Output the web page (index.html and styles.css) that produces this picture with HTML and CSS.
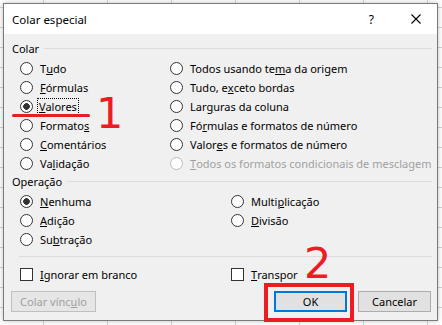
FILE: index.html
```html
<!DOCTYPE html>
<html lang="pt-BR">
<head>
    <meta charset="UTF-8">
    <meta name="viewport" content="width=device-width, initial-scale=1.0">
    <title>Colar especial</title>
    <link rel="stylesheet" href="styles.css">
</head>
<body>
    <div class="dialog">
        <div class="titlebar">
            <span class="title">Colar especial</span>
            <span class="help">?</span>
            <span class="close">
                <svg width="10" height="10" viewBox="0 0 10 10"><path d="M0.5 0.5 L9.5 9.5 M9.5 0.5 L0.5 9.5" stroke="#000" stroke-width="1.1" fill="none"/></svg>
            </span>
        </div>

        <div class="content">
            <div class="group-title"><span>Colar</span></div>
            <div class="options paste">
                <label class="opt"><span class="radio"></span>T<u>u</u>do</label>
                <label class="opt"><span class="radio"></span>Todos usando te<u>m</u>a da origem</label>
                <label class="opt"><span class="radio"></span><u>F</u>órmulas</label>
                <label class="opt"><span class="radio"></span>Tudo, e<u>x</u>ceto bordas</label>
                <label class="opt"><span class="radio checked"></span><span class="focus"><u>V</u>alores</span></label>
                <label class="opt"><span class="radio"></span>Lar<u>g</u>uras da coluna</label>
                <label class="opt"><span class="radio"></span>Formato<u>s</u></label>
                <label class="opt"><span class="radio"></span>Fó<u>r</u>mulas e formatos de número</label>
                <label class="opt"><span class="radio"></span><u>C</u>omentários</label>
                <label class="opt"><span class="radio"></span>Valor<u>e</u>s e formatos de número</label>
                <label class="opt"><span class="radio"></span>Va<u>l</u>idação</label>
                <label class="opt disabled"><span class="radio"></span><u>T</u>odos os formatos condicionais de mesclagem</label>
            </div>

            <div class="group-title"><span>Operação</span></div>
            <div class="options ops">
                <label class="opt"><span class="radio checked"></span><u>N</u>enhuma</label>
                <label class="opt"><span class="radio"></span>Multi<u>p</u>licação</label>
                <label class="opt"><span class="radio"></span><u>A</u>dição</label>
                <label class="opt"><span class="radio"></span><u>D</u>ivisão</label>
                <label class="opt"><span class="radio"></span>Su<u>b</u>tração</label>
            </div>

            <div class="sep"></div>

            <div class="checks">
                <label class="opt"><span class="check"></span><u>I</u>gnorar em branco</label>
                <label class="opt"><span class="check"></span><u>T</u>ranspor</label>
            </div>

            <div class="buttons">
                <button class="btn link" disabled>Colar vínc<u>u</u>lo</button>
                <button class="btn default">OK</button>
                <button class="btn">Cancelar</button>
            </div>
        </div>

        <!-- annotations drawn over the dialog -->
        <div class="mark mark-1">1</div>
        <div class="underline"></div>
        <div class="mark mark-2">2</div>
        <div class="ok-box"></div>
    </div>
</body>
</html>
```

FILE: styles.css
```css
* {
    margin: 0;
    padding: 0;
    box-sizing: border-box;
}

body {
    width: 442px;
    height: 325px;
    overflow: hidden;
    font-family: "Noto Sans", sans-serif;
    font-size: 11px;
    color: #000;
    background-color: #fff;
    background-image:
        linear-gradient(to right, #d4d4d4 1px, transparent 1px),
        linear-gradient(to bottom, #d4d4d4 1px, transparent 1px);
    background-size: 64px 20px;
    background-position: 43px 7px;
}

.dialog {
    position: relative;
    margin: 3px 0 0 3px;
    width: 435px;
    height: 318px;
    border: 1px solid #7a7a7a;
    background: #f0f0f0;
    box-shadow: 0 0 5px rgba(0, 0, 0, 0.25);
}

.titlebar {
    height: 30px;
    background: #fff;
    display: flex;
    align-items: center;
    padding-left: 8px;
    font-size: 11.5px;
}

.help {
    margin-left: auto;
    font-size: 12px;
}

.close {
    display: flex;
    margin: 0 16px 0 37px;
}

.content {
    padding: 6px 5px 0 8px;
}

.group-title {
    display: flex;
    align-items: center;
    height: 16px;
}

.group-title::after {
    content: "";
    flex: 1;
    height: 1px;
    margin-left: 5px;
    background: #dcdcdc;
}

.options {
    display: grid;
    grid-auto-rows: 19px;
    margin: 3px 0 0 8px;
}

.paste {
    grid-template-columns: 150px 1fr;
}

.ops {
    grid-template-columns: 211px 1fr;
}

.opt {
    display: flex;
    align-items: center;
    white-space: nowrap;
}

.radio {
    flex: none;
    width: 13px;
    height: 13px;
    margin-right: 7px;
    border: 1px solid #333;
    border-radius: 50%;
    background: #fff;
}

.radio.checked {
    background: radial-gradient(circle, #333 0 3px, #fff 3.6px);
}

.opt.disabled {
    color: #a0a0a0;
}

.opt.disabled .radio {
    border-color: #bcbcbc;
}

.focus {
    outline: 1px dotted #000;
    outline-offset: 0;
    padding: 0 1px;
    margin-left: -2px;
    line-height: 15px;
}

.sep {
    height: 1px;
    margin: 7px 0 0 7px;
    background: #dcdcdc;
}

.checks {
    display: grid;
    grid-template-columns: 211px 1fr;
    height: 19px;
    margin: 8px 0 0 8px;
}

.check {
    flex: none;
    width: 13px;
    height: 13px;
    margin-right: 7px;
    border: 1px solid #333;
    background: #fff;
}

.buttons {
    display: flex;
    margin: 7px 1px 0 -1px;
}

.btn {
    width: 73px;
    height: 21px;
    font: inherit;
    color: #000;
    background: #e1e1e1;
    border: 1px solid #adadad;
}

.btn.link {
    width: 85px;
    margin-right: auto;
    color: #a0a0a0;
    background: #e6e6e6;
    border-color: #bfbfbf;
}

.btn.default {
    margin-right: 11px;
    border: 2px solid #0078d7;
}

.mark {
    position: absolute;
    font-family: "DejaVu Sans", sans-serif;
    font-size: 43px;
    line-height: 43px;
    color: #ed1c24;
}

.mark-1 {
    left: 92px;
    top: 88px;
}

.mark-2 {
    left: 300px;
    top: 238px;
}

.underline {
    position: absolute;
    left: 8px;
    top: 110px;
    width: 78px;
    height: 3px;
    border-radius: 2px;
    background: #ed1c24;
}

.ok-box {
    position: absolute;
    left: 260px;
    top: 279px;
    width: 90px;
    height: 39px;
    border: 4px solid #ed1c24;
}
```
